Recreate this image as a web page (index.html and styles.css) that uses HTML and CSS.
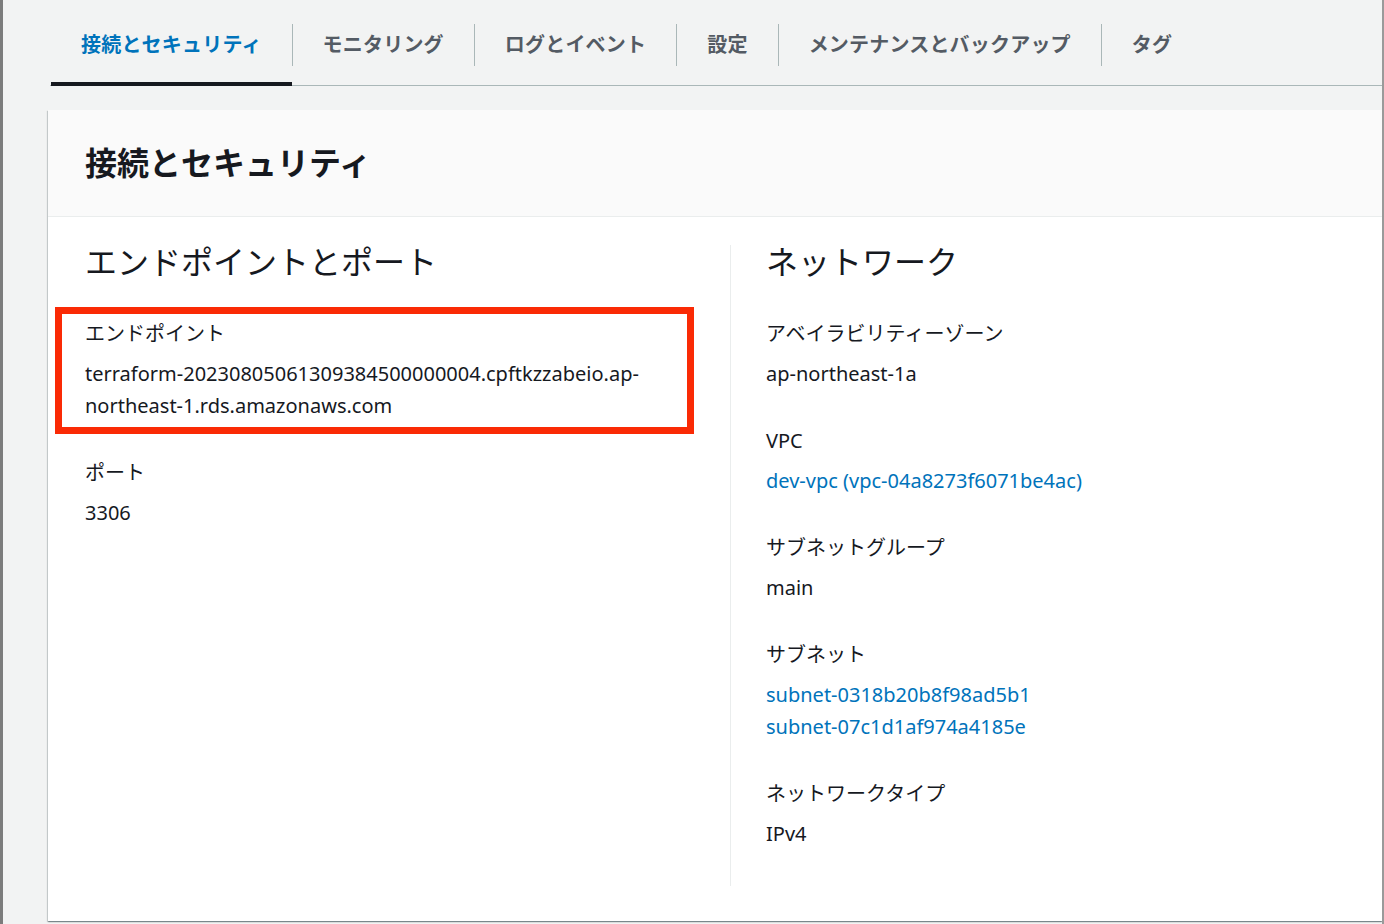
FILE: index.html
```html
<!DOCTYPE html>
<html lang="ja">
<head>
<meta charset="utf-8">
<title>接続とセキュリティ</title>
<link rel="stylesheet" href="styles.css">
</head>
<body>
<div class="page">
  <nav class="tabs">
    <a class="tab active"><span class="tab-label">接続とセキュリティ</span></a>
    <a class="tab"><span class="tab-label">モニタリング</span></a>
    <a class="tab"><span class="tab-label">ログとイベント</span></a>
    <a class="tab"><span class="tab-label">設定</span></a>
    <a class="tab"><span class="tab-label">メンテナンスとバックアップ</span></a>
    <a class="tab"><span class="tab-label">タグ</span></a>
  </nav>
  <section class="card">
    <header class="card-header">
      <h2>接続とセキュリティ</h2>
    </header>
    <div class="card-body">
      <div class="col">
        <h3>エンドポイントとポート</h3>
        <div class="field highlight">
          <div class="label">エンドポイント</div>
          <div class="value">terraform-20230805061309384500000004.cpftkzzabeio.ap-northeast-1.rds.amazonaws.com</div>
        </div>
        <div class="field">
          <div class="label">ポート</div>
          <div class="value">3306</div>
        </div>
      </div>
      <div class="col col-right">
        <h3>ネットワーク</h3>
        <div class="field">
          <div class="label">アベイラビリティーゾーン</div>
          <div class="value">ap-northeast-1a</div>
        </div>
        <div class="field">
          <div class="label">VPC</div>
          <div class="value"><a class="link">dev-vpc (vpc-04a8273f6071be4ac)</a></div>
        </div>
        <div class="field">
          <div class="label">サブネットグループ</div>
          <div class="value">main</div>
        </div>
        <div class="field">
          <div class="label">サブネット</div>
          <div class="value"><a class="link">subnet-0318b20b8f98ad5b1</a><br><a class="link">subnet-07c1d1af974a4185e</a></div>
        </div>
        <div class="field">
          <div class="label">ネットワークタイプ</div>
          <div class="value">IPv4</div>
        </div>
      </div>
    </div>
  </section>
</div>
</body>
</html>
```

FILE: styles.css
```css
html, body {
  margin: 0;
  padding: 0;
}

body {
  background: #f2f3f3;
  font-family: "Noto Sans", "Noto Sans CJK JP", sans-serif;
  color: #16191f;
  border-left: 3px solid #7c7c7c;
  border-right: 2px solid #9a9a9a;
  box-sizing: border-box;
  height: 924px;
  overflow: hidden;
}

.page {
  padding-left: 45px;
}

.tabs {
  display: flex;
  margin-left: 2px;
  padding-top: 24px;
  border-bottom: 1px solid #aab7b8;
}

.tab {
  position: relative;
  display: block;
  padding-bottom: 19px;
  font-size: 20px;
  font-weight: 700;
  color: #545b64;
  cursor: pointer;
}

.tab:first-child {
  margin-left: 1px;
}

.tab-label {
  display: block;
  padding: 0 30px;
  line-height: 42px;
  letter-spacing: 0.2px;
}

.tab + .tab .tab-label {
  border-left: 1px solid #aab7b8;
}

.tab.active {
  color: #0073bb;
}

.tab.active::after {
  content: "";
  position: absolute;
  left: 0;
  right: 0;
  bottom: -1px;
  height: 4px;
  background: #16191f;
}

.card {
  margin-top: 24px;
  background: #ffffff;
  box-shadow: 0 1px 1px 0 rgba(0, 28, 36, 0.3), 1px 1px 1px 0 rgba(0, 28, 36, 0.15), -1px 1px 1px 0 rgba(0, 28, 36, 0.15);
}

.card-header {
  background: #fafafa;
  border-bottom: 1px solid #eaeded;
  padding: 33px 37px;
}

.card-header h2 {
  margin: 0;
  font-size: 32px;
  line-height: 40px;
  font-weight: 700;
  color: #16191f;
}

.card-body {
  display: grid;
  grid-template-columns: 645px 1fr;
  padding: 28px 0 35px 37px;
}

.col {
  padding-bottom: 36px;
}

.col-right {
  border-left: 1px solid #eaeded;
  padding-left: 35px;
}

.col h3 {
  margin: 0 0 39px;
  font-size: 32px;
  line-height: 34px;
  font-weight: 400;
  color: #16191f;
}

.field + .field {
  margin-top: 35px;
}

.label,
.value {
  font-size: 20px;
  line-height: 32px;
}

.label {
  margin-bottom: 8px;
}

.link {
  color: #0073bb;
  text-decoration: none;
}

.highlight {
  position: relative;
}

.highlight::before {
  content: "";
  position: absolute;
  top: -11px;
  left: -30px;
  width: 639px;
  height: 127px;
  border: 7px solid #fa2a05;
  box-sizing: border-box;
}
```
